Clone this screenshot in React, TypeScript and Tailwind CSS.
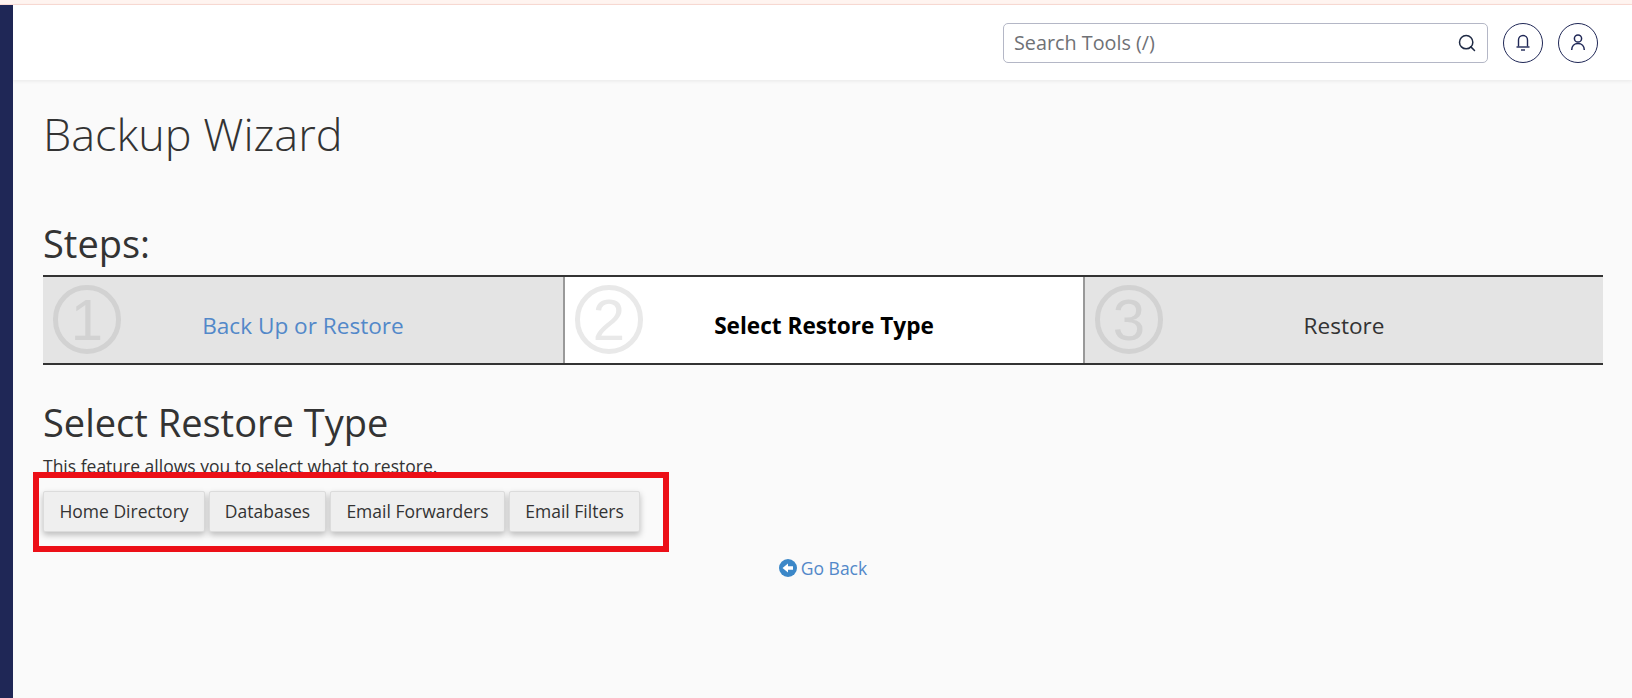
import { Search } from "lucide-react";

const font = { fontFamily: '"Open Sans", "Noto Sans", sans-serif' };

const steps = [
  { num: "1", label: "Back Up or Restore", active: false, link: true },
  { num: "2", label: "Select Restore Type", active: true, link: false },
  { num: "3", label: "Restore", active: false, link: false },
];

const buttons = [
  { label: "Home Directory", width: "w-[162px]" },
  { label: "Databases", width: "w-[117px]" },
  { label: "Email Forwarders", width: "w-[175px]" },
  { label: "Email Filters", width: "w-[131px]" },
];

function BellIcon() {
  return (
    <svg viewBox="0 0 18 20" className="h-[20px] w-[18px]" fill="none" stroke="#1f2756" strokeWidth="1.4">
      <path d="M4.5 13.5V7a4.5 4.5 0 0 1 9 0v6.5" />
      <path d="M2.5 14h13" />
      <path d="M7 17h4" />
    </svg>
  );
}

function UserIcon() {
  return (
    <svg viewBox="0 0 18 20" className="h-[20px] w-[18px]" fill="none" stroke="#1f2756" strokeWidth="1.5">
      <circle cx="9" cy="5.5" r="3.6" />
      <path d="M2.7 17c0-4 2.6-6.6 6.3-6.6s6.3 2.6 6.3 6.6" />
    </svg>
  );
}

export default function App() {
  return (
    <div style={font} className="h-[698px] w-[1632px] overflow-hidden bg-[#fafafa] text-[#333]">
      <div className="h-[5px] border-b border-[#fbdcd5] bg-[#fff4f0]" />
      <div className="flex h-[693px]">
        <aside className="w-[13px] shrink-0 bg-[#1f2756]" />
        <div className="min-w-0 flex-1">
          <header className="flex h-[75px] items-start justify-end bg-white pt-[18px] pr-[34px] shadow-[0_1px_4px_rgba(0,0,0,0.08)]">
            <div className="flex h-[40px] w-[485px] items-center justify-between rounded-[5px] border border-[#b4b7c6] bg-white pr-[10px] pl-[10px]">
              <span className="text-[19.8px] text-[#6f7176]">Search Tools (/)</span>
              <Search className="h-[20px] w-[20px] text-[#1f2a44]" strokeWidth={1.8} />
            </div>
            <button className="ml-[15px] flex h-[40px] w-[40px] items-center justify-center rounded-full border border-[#1f2756]">
              <BellIcon />
            </button>
            <button className="ml-[15px] flex h-[40px] w-[40px] items-center justify-center rounded-full border border-[#1f2756]">
              <UserIcon />
            </button>
          </header>

          <main className="pr-[29px] pl-[30px]">
            <h1 className="mt-[24px] text-[45px] leading-[60px] font-light text-[#333]">Backup Wizard</h1>
            <h2 className="mt-[54px] text-[38px] leading-[50px] font-medium">Steps:</h2>
            <div className="mt-[7px] grid grid-cols-3 border-y-2 border-[#333]">
              {steps.map((step, i) => (
                <div
                  key={step.num}
                  className={`relative flex h-[86px] items-center justify-center pt-[11px] ${
                    step.active ? "bg-white" : "bg-[#e4e4e4]"
                  } ${i > 0 ? "border-l-2 border-[#999]" : ""}`}
                >
                  <div
                    className={`absolute top-[8px] left-[10px] flex h-[69px] w-[68px] items-center justify-center rounded-full border-[5px] text-[58px] leading-none ${
                      step.active ? "border-[#e9e9e9] text-[#e9e9e9]" : "border-[#d2d2d2] text-[#d2d2d2]"
                    }`}
                    style={{ fontFamily: '"Liberation Sans", sans-serif' }}
                  >
                    {step.num}
                  </div>
                  <span
                    className={
                      step.active
                        ? "text-[22.6px] font-bold text-black"
                        : step.link
                          ? "text-[22.6px] text-[#5288c9]"
                          : "text-[22.6px] text-[#333]"
                    }
                  >
                    {step.label}
                  </span>
                </div>
              ))}
            </div>
            <h2 className="mt-[32px] text-[38px] leading-[50px] font-medium">Select Restore Type</h2>
            <p className="mt-[8px] text-[17.5px] leading-[22px]">This feature allows you to select what to restore.</p>
            <div className="relative mt-[14px] flex gap-[4px]">
              {buttons.map((b) => (
                <button
                  key={b.label}
                  className={`${b.width} h-[41px] rounded-[2px] border border-[#dcdcdc] bg-[#efefef] text-[17.5px] text-[#333] shadow-[0_3px_6px_rgba(0,0,0,0.25)]`}
                >
                  {b.label}
                </button>
              ))}
              <div className="absolute top-[-19px] left-[-10px] h-[80px] w-[636px] border-[6px] border-[#ec0f17]" />
            </div>
            <div className="mt-[24px] flex items-center justify-center gap-[4px] text-[17.5px] leading-[24px] text-[#5288c9]">
              <svg viewBox="0 0 18 18" className="h-[18px] w-[18px]">
                <circle cx="9" cy="9" r="9" fill="#3b87c8" />
                <path d="M3.5 9 9 4.5V7.2h5v3.6H9v2.7z" fill="#fff" />
              </svg>
              <span>Go Back</span>
            </div>
          </main>
        </div>
      </div>
    </div>
  );
}
